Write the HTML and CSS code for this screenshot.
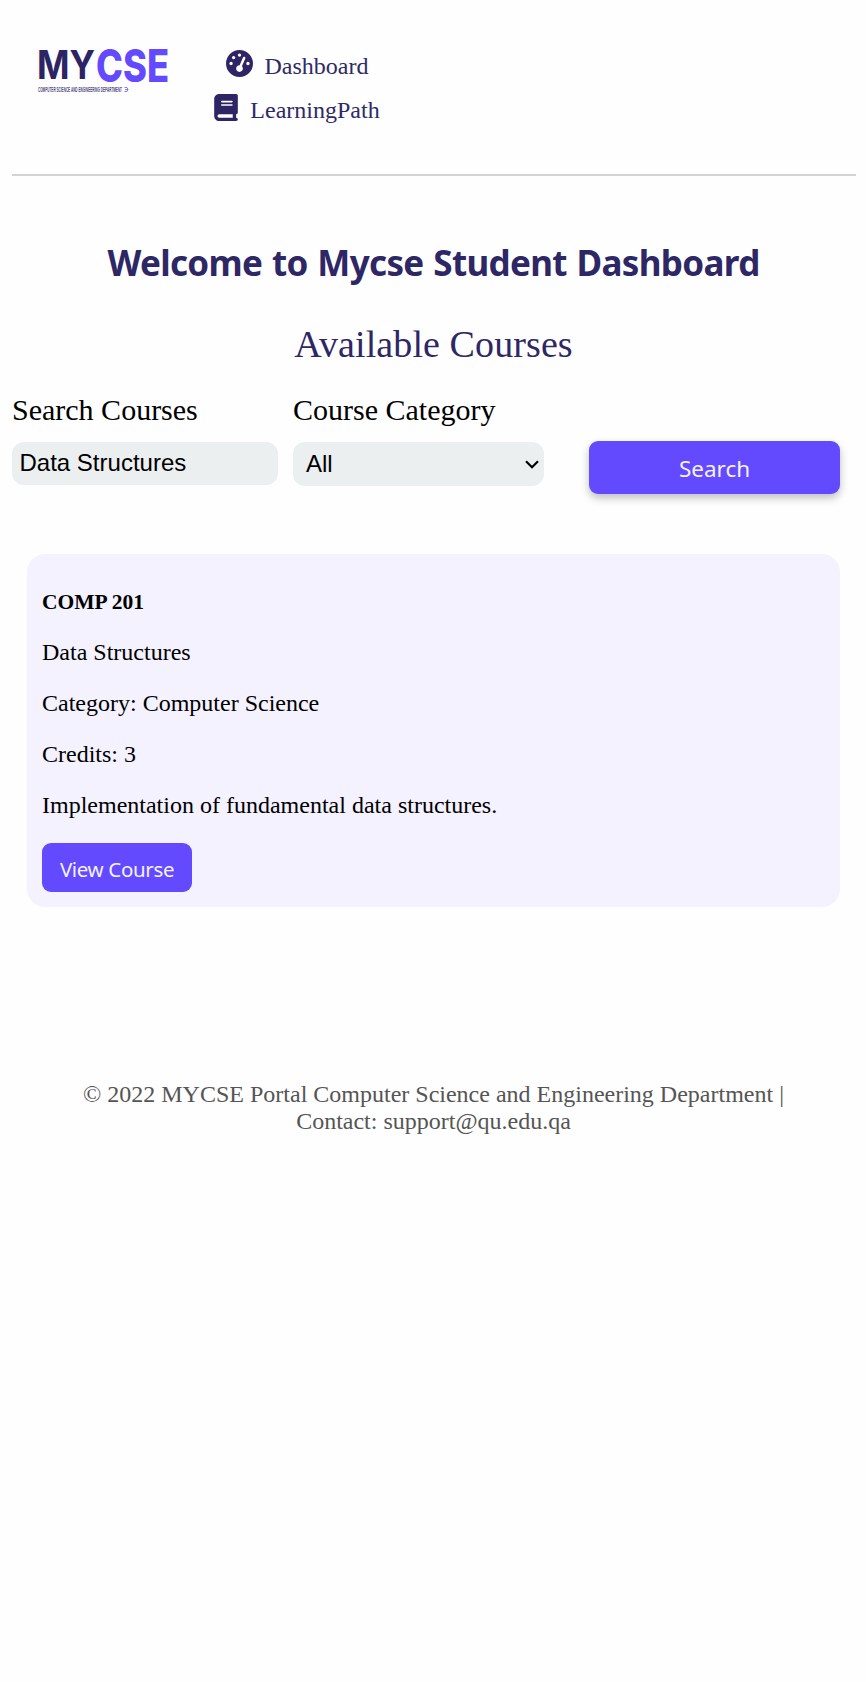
FILE: index.html
```html
<!DOCTYPE html>
<html lang="en">
<head>
<meta charset="utf-8">
<title>MYCSE Student Dashboard</title>
<link rel="stylesheet" href="styles.css">
</head>
<body>
<header class="header">
  <svg class="logo" viewBox="0 0 140 50" role="img" aria-label="MYCSE">
    <text class="logo-my" x="5" y="33" textLength="58" lengthAdjust="spacingAndGlyphs">MY</text>
    <text class="logo-cse" x="64" y="36" textLength="73" lengthAdjust="spacingAndGlyphs">CSE</text>
    <text class="logo-tag" x="6" y="45.5" textLength="84" lengthAdjust="spacingAndGlyphs">COMPUTER SCIENCE AND ENGINEERING DEPARTMENT</text>
    <path class="logo-mark" d="M92.5 41.5h2.500l1 2l-1 2h-2.500M93 43.500h3"/>
  </svg>
  <nav class="nav">
    <a class="nav-item">
      <svg class="icon-gauge" viewBox="0 0 512 512"><path d="M0 256a256 256 0 1 1 512 0A256 256 0 1 1 0 256zM288 96a32 32 0 1 0 -64 0 32 32 0 1 0 64 0zM256 416c35.3 0 64-28.7 64-64c0-17.4-6.9-33.1-18.1-44.6L366 161.7c5.3-12.1-.2-26.3-12.3-31.6s-26.3 .2-31.6 12.3L257.9 288c-.6 0-1.3 0-1.9 0c-35.3 0-64 28.7-64 64s28.7 64 64 64zM176 144a32 32 0 1 0 -64 0 32 32 0 1 0 64 0zM96 288a32 32 0 1 0 0-64 32 32 0 1 0 0 64zm352-32a32 32 0 1 0 -64 0 32 32 0 1 0 64 0z"/></svg>
      <span>Dashboard</span>
    </a>
    <a class="nav-item">
      <svg class="icon-book" viewBox="0 0 448 512"><path d="M96 0C43 0 0 43 0 96V416c0 53 43 96 96 96H384h32c17.7 0 32-14.3 32-32s-14.3-32-32-32V384c17.7 0 32-14.3 32-32V32c0-17.7-14.3-32-32-32H384 96zm0 384H352v64H96c-17.7 0-32-14.3-32-32s14.3-32 32-32zm32-240c0-8.8 7.2-16 16-16H336c8.8 0 16 7.2 16 16s-7.2 16-16 16H144c-8.8 0-16-7.2-16-16zm16 48H336c8.8 0 16 7.2 16 16s-7.2 16-16 16H144c-8.8 0-16-7.2-16-16s7.2-16 16-16z"/></svg>
      <span>LearningPath</span>
    </a>
  </nav>
</header>
<main>
  <h1 class="title">Welcome to Mycse Student Dashboard</h1>
  <h2 class="subtitle">Available Courses</h2>
  <form class="search">
    <div class="field field-name">
      <label class="label" for="name">Search Courses</label>
      <input class="input" id="name" type="text" value="Data Structures">
    </div>
    <div class="field field-category">
      <span class="label">Course Category</span>
      <div class="select">
        <span>All</span>
        <svg class="chevron" viewBox="0 0 14 9"><path d="M1 1.2L7 7.2L13 1.2"/></svg>
      </div>
    </div>
    <button class="search-button" type="button">Search</button>
  </form>
  <section class="card">
    <h3 class="course-code">COMP 201</h3>
    <p>Data Structures</p>
    <p>Category: Computer Science</p>
    <p>Credits: 3</p>
    <p>Implementation of fundamental data structures.</p>
    <button class="view-button" type="button">View Course</button>
  </section>
</main>
<footer class="footer">© 2022 MYCSE Portal Computer Science and Engineering Department | Contact: support@qu.edu.qa</footer>
</body>
</html>
```
FILE: styles.css
```css
* { box-sizing: border-box; }
body {
  margin: 0;
  padding: 0 10px 0 12px;
  background: #fefefe;
  color: #000;
  font: 24px/27px "Liberation Serif", "Times New Roman", serif;
}
.header {
  display: flex;
  height: 176px;
  padding: 46px 0 0 20px;
  border-bottom: 2px solid #d3d3d3;
}
.logo { width: 140px; height: 50px; overflow: visible; font-family: Inter, sans-serif; }
.logo-my { font-size: 40px; font-weight: 700; fill: #2c2463; }
.logo-cse { font-size: 45px; font-weight: 800; fill: #634aff; }
.logo-tag { font-family: "Liberation Sans", sans-serif; font-size: 6.5px; font-weight: 700; fill: #514981; }
.logo-mark { fill: none; stroke: #8879ee; stroke-width: 1; }
.nav {
  display: flex;
  flex-direction: column;
  align-items: center;
  gap: 17px;
  width: 168px;
  margin-left: 41px;
  padding-top: 7px;
  color: #2e2a66;
}
.nav-item { display: flex; height: 27px; gap: 12px; }
.nav svg { height: 27px; margin-top: -3px; fill: #2e2566; }
.icon-gauge { width: 27px; }
.icon-book { width: 24px; }
main { margin-right: 1px; }
.title {
  margin: 60px 0 0;
  color: #2e2765;
  font: 700 35px/54px "Noto Sans", "Segoe UI", sans-serif;
  letter-spacing: -.65px;
  word-spacing: 1.2px;
  text-align: center;
}
.subtitle {
  margin: 32px 0 0;
  color: #2e2765;
  font-size: 38px;
  font-weight: 400;
  letter-spacing: .1px;
  line-height: 44px;
  text-align: center;
}
.search {
  display: flex;
  align-items: flex-start;
  height: 161px;
  margin-top: 27px;
}
.field { display: flex; flex-direction: column; gap: 15px; }
.field-name { width: 266px; margin-right: 15px; }
.field-category { width: 251px; }
.label { font-size: 30px; line-height: 34px; }
.input, .select {
  width: 100%;
  border: 0;
  border-radius: 12px;
  background: #ebeff0;
  color: #000;
  font: 24px/27px "Liberation Sans", Arial, sans-serif;
}
.input { height: 43px; padding: 0 8px 2px 7.5px; }
.select {
  display: flex;
  align-items: center;
  justify-content: space-between;
  height: 44px;
  padding: 0 5px 0 13px;
}
.select span { margin-top: -2px; }
.chevron { width: 14px; height: 9px; fill: none; stroke: #000; stroke-width: 2.2; }
.search-button, .view-button {
  border: 0;
  border-radius: 9px;
  background: #634aff;
  color: #f4f2ff;
  font-family: "Noto Sans", "Segoe UI", sans-serif;
}
.search-button {
  width: 251px;
  height: 53px;
  margin: 48px 0 0 45px;
  padding: 2px 0 0;
  font-size: 22.5px;
  box-shadow: 0 4px 8px rgba(0, 0, 0, .25);
}
.card {
  height: 353px;
  margin: 0 15px;
  padding: 35px 15px 0;
  border-radius: 18px;
  background: #f4f2ff;
}
.course-code { margin: 0 0 23px; font-size: 21.5px; line-height: 27px; }
.card p { margin: 0 0 24px; }
.view-button {
  display: block;
  width: 150px;
  height: 49px;
  padding: 3px 0 0;
  font-size: 20.5px;
  letter-spacing: -.35px;
}
.footer {
  margin: 174px 1px 0 0;
  padding: 0 68px;
  color: #555;
  text-align: center;
}
```
